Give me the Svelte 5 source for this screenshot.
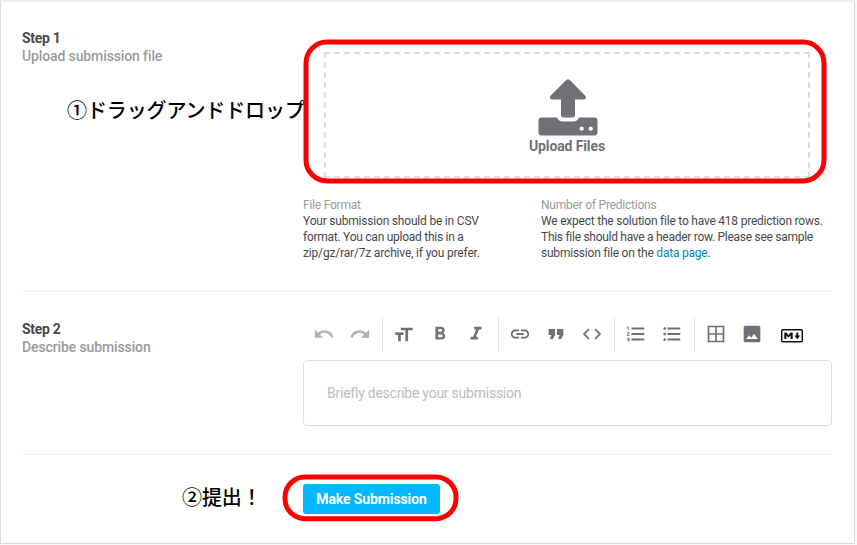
<script>
  const groups = [
    [
      { name: 'Undo', muted: true, d: 'M12.5 8c-2.65 0-5.05.99-6.9 2.6L2 7v9h9l-3.62-3.62c1.39-1.16 3.16-1.88 5.12-1.88 3.54 0 6.55 2.31 7.6 5.5l2.37-.78C21.08 11.03 17.15 8 12.5 8z' },
      { name: 'Redo', muted: true, d: 'M18.4 10.6C16.55 8.99 14.15 8 11.5 8c-4.65 0-8.58 3.03-9.96 7.22L3.9 16c1.05-3.19 4.05-5.5 7.6-5.5 1.95 0 3.73.72 5.12 1.88L13 16h9V7l-3.6 3.6z' }
    ],
    [
      { name: 'Heading', d: 'M9 4v3h5v12h3V7h5V4H9zm-6 8h3v7h3v-7h3V9H3v3z' },
      { name: 'Bold', d: 'M15.6 10.79c.97-.67 1.65-1.77 1.65-2.79 0-2.26-1.75-4-4-4H7v14h7.04c2.09 0 3.71-1.7 3.71-3.79 0-1.52-.86-2.82-2.15-3.42zM10 6.5h3c.83 0 1.5.67 1.5 1.5s-.67 1.5-1.5 1.5h-3v-3zm3.5 9H10v-3h3.5c.83 0 1.5.67 1.5 1.5s-.67 1.5-1.5 1.5z' },
      { name: 'Italic', d: 'M10 4v3h2.21l-3.42 8H6v3h8v-3h-2.21l3.42-8H18V4z' }
    ],
    [
      { name: 'Link', d: 'M3.9 12c0-1.71 1.39-3.1 3.1-3.1h4V7H7c-2.76 0-5 2.24-5 5s2.24 5 5 5h4v-1.9H7c-1.71 0-3.1-1.39-3.1-3.1zM8 13h8v-2H8v2zm9-6h-4v1.9h4c1.71 0 3.1 1.39 3.1 3.1s-1.39 3.1-3.1 3.1h-4V17h4c2.76 0 5-2.24 5-5s-2.24-5-5-5z' },
      { name: 'Quote', d: 'M5 17.500h3.500l2.500-4.500V6.500H4V13h3zm9 0h3.500l2.500-4.500V6.500h-7V13h3z' },
      { name: 'Code', d: 'M9.4 16.6L4.8 12l4.6-4.6L8 6l-6 6 6 6 1.4-1.4zm5.2 0l4.6-4.6-4.6-4.6L16 6l6 6-6 6-1.4-1.4z' }
    ],
    [
      { name: 'Numbered list', d: 'M2 17h2v.5H3v1h1v.5H2v1h3v-4H2v1zm1-9h1V4H2v1h1v3zm-1 3h1.8L2 13.1v.9h3v-1H3.2L5 10.9V10H2v1zm5-6v2h14V5H7zm0 14h14v-2H7v2zm0-6h14v-2H7v2z' },
      { name: 'Bulleted list', d: 'M4 10.5c-.83 0-1.5.67-1.5 1.5s.67 1.5 1.5 1.5 1.5-.67 1.5-1.5-.67-1.5-1.5-1.5zm0-6c-.83 0-1.5.67-1.5 1.5S3.17 7.5 4 7.5 5.5 6.83 5.5 6 4.83 4.5 4 4.5zm0 12c-.83 0-1.5.68-1.5 1.5s.68 1.5 1.5 1.5 1.5-.68 1.5-1.5-.67-1.5-1.5-1.5zM7 19h14v-2H7v2zm0-6h14v-2H7v2zm0-8v2h14V5H7z' }
    ],
    [
      { name: 'Table', d: 'M2 2h20v20H2zM4 4v7h7V4zM13 4v7h7V4zM4 13v7h7v-7zM13 13v7h7v-7z' },
      { name: 'Image', d: 'M22 20V4c0-1.1-.9-2-2-2H4c-1.1 0-2 .9-2 2v16c0 1.1.9 2 2 2h16c1.1 0 2-.9 2-2zM8.500 13.500l2.500 3.010L14.500 12l4.500 6H5l3.500-4.500z' }
    ]
  ];
</script>

<main class="card">
  <section class="step upload-step">
    <div class="side">
      <h2>Step 1</h2>
      <p class="sub">Upload submission file</p>
      <p class="note drag">①ドラッグアンドドロップ</p>
    </div>
    <div class="body">
      <div class="drop">
        <svg class="up" width="60" height="57" viewBox="0 0 60 57" fill="#707177">
          <path d="M28 1.2Q30 -.7 32 1.2L47.500 17Q49 20.200 45.500 20.500H37V36Q37 38.500 34.500 38.500H25.500Q23 38.500 23 36V20.500H14Q11 20.200 12.300 17Z" />
          <path d="M3.500 38.500H19Q20.500 42.500 25 42.500H35Q39.500 42.500 41 38.500H56.500Q59.500 38.500 59.500 41.500V53.500Q59.500 56.500 56.500 56.500H3.500Q.5 56.500 .5 53.500V41.500Q.5 38.500 3.500 38.500Z" />
          <circle cx="43.700" cy="49.700" r="2.100" fill="#fff" />
          <circle cx="52.700" cy="49.700" r="2.100" fill="#fff" />
        </svg>
        <strong>Upload Files</strong>
      </div>
      <div class="info">
        <div class="format">
          <h3>File Format</h3>
          <p><span class="f1">Your submission should be in CSV</span><br /><span class="f2">format. You can upload this in a</span><br /><span class="f3">zip/gz/rar/7z archive, if you prefer.</span></p>
        </div>
        <div class="rows">
          <h3>Number of Predictions</h3>
          <p><span class="r1">We expect the solution file to have 418 prediction rows.</span><br /><span class="r2">This file should have a header row. Please see sample</span><br /><span class="r3">submission file on the <a href="#data">data page</a>.</span></p>
        </div>
      </div>
    </div>
  </section>

  <section class="step describe-step">
    <div class="side">
      <h2>Step 2</h2>
      <p class="sub">Describe submission</p>
    </div>
    <div class="body">
      <div class="toolbar">
        {#each groups as group, i}
          <div class="group" class:first={i === 0}>
            {#each group as icon}
              <span class="tool" class:muted={icon.muted} role="img" aria-label={icon.name}>
                {#if icon.name === 'Heading'}
                  <svg width="20" height="20" viewBox="1.500 0 22 22"><path d={icon.d} /></svg>
                {:else if icon.name === 'Table' || icon.name === 'Image'}
                  <svg width="20" height="20" viewBox="0 0 24 24"><path fill-rule="evenodd" d={icon.d} /></svg>
                {:else}
                  <svg width="22" height="22" viewBox="0 0 24 24"><path d={icon.d} /></svg>
                {/if}
              </span>
            {/each}
            {#if i === groups.length - 1}
              <span class="tool markdown" role="img" aria-label="Markdown">
                <svg width="22" height="14" viewBox="0 0 22 14">
                  <rect x=".75" y=".75" width="20.500" height="12" rx="1" fill="#fff" stroke="#111" stroke-width="1.500" />
                  <path d="M3.300 10V3.500H5.500L7.500 6L9.500 3.500H11.700V10H9.600V6.400L7.500 8.800L5.400 6.400V10ZM15.300 3.500H17.300V6.600H19.200L16.300 10.200L13.400 6.600H15.300Z" fill="#111" />
                </svg>
              </span>
            {/if}
          </div>
        {/each}
      </div>
      <div class="editor">Briefly describe your submission</div>
    </div>
  </section>

  <section class="step submit-step">
    <div class="side"><p class="note send">②提出！</p></div>
    <div class="body"><button>Make Submission</button></div>
  </section>

  <svg class="rings" width="857" height="545" viewBox="0 0 857 545" fill="none" stroke="#f00" stroke-width="5" aria-hidden="true">
    <rect x="306" y="42" width="518" height="139" rx="21" />
    <rect x="285" y="477" width="171" height="41.700" rx="20" />
  </svg>
</main>

<style>
  :global(body) { background: #f8f8f8; }
  * { box-sizing: border-box; }
  h2, h3, p { margin: 0; }
  .card {
    position: relative;
    width: 855px;
    height: 544px;
    padding: 0 22px 0 21px;
    border: 1px solid #d9dcde;
    border-top: 2px solid #f0f0f0;
    background: #fff;
    overflow: hidden;
    font-family: Roboto, "Noto Sans CJK JP", sans-serif;
    color: #47494d;
  }
  .step { display: flex; width: 810px; }
  .side { width: 281px; flex: none; }
  .body { width: 529px; flex: none; }
  .upload-step { height: 290px; padding-top: 27px; border-bottom: 1px solid #efefef; }
  .describe-step { height: 163px; padding-top: 25px; border-bottom: 1px solid #efefef; }
  .submit-step { padding-top: 29px; }
  h2 { font-size: 14px; line-height: 18px; font-weight: 700; letter-spacing: -.3px; color: #47494d; white-space: nowrap; }
  .sub { font-size: 14px; line-height: 18px; font-weight: 500; letter-spacing: -.12px; color: #9b9b9b; white-space: nowrap; }
  .describe-step .side { padding-top: 3px; }
  .note { font-family: "Noto Sans CJK JP", sans-serif; font-weight: 500; color: #000; font-size: 20px; line-height: 30px; letter-spacing: -.12px; white-space: nowrap; }
  .drag { margin: 30px 0 0 45px; }
  .send { margin: -2px 0 0 160px; }
  .drop {
    margin: 23px 0 0 21px;
    width: 486px;
    height: 126px;
    border: 2px dashed #dedede;
    display: flex;
    flex-direction: column;
    align-items: center;
    padding-top: 25px;
  }
  .up { display: block; flex: none; margin-left: 1px; }
  .drop strong { font-size: 14px; line-height: 18px; margin-top: 1px; letter-spacing: -.12px; color: #707177; font-weight: 700; }
  .info { display: flex; margin-top: 19px; font-size: 12px; line-height: 16px; white-space: nowrap; }
  .format { width: 238px; flex: none; }
  h3 { font-size: 12px; line-height: 16px; font-weight: 400; letter-spacing: -.23px; color: #9b9b9b; }
  .f1 { letter-spacing: -.2px; }
  .f2 { letter-spacing: -.26px; }
  .f3 { letter-spacing: -.17px; }
  .r1 { letter-spacing: -.22px; }
  .r2 { letter-spacing: -.28px; }
  .r3 { letter-spacing: -.22px; }
  a { color: #008abc; text-decoration: none; }
  .toolbar { display: flex; height: 35px; }
  .group { display: flex; align-items: flex-start; padding: 0 4px 0 3px; border-left: 1px solid #e5e5e5; }
  .first { border: 0; }
  .tool { width: 36px; height: 34px; display: flex; align-items: center; justify-content: center; fill: #707177; }
  .muted { fill: #b3b3b3; }
  .tool svg { display: block; }
  .markdown { width: 44px; height: 38px; }
  .editor { margin-top: 8px; height: 66px; border: 1px solid #dedede; border-radius: 4px; padding: 0 23px; line-height: 65px; font-size: 14px; letter-spacing: -.24px; color: #bdbdbd; }
  button { display: block; width: 137px; height: 30px; padding: 0; border: 0; border-radius: 3px; background: #00b8ff; color: #fff; font: 700 14px/30px Roboto, sans-serif; letter-spacing: -.12px; white-space: nowrap; }
  .rings { position: absolute; left: -1px; top: -2px; pointer-events: none; }
</style>
